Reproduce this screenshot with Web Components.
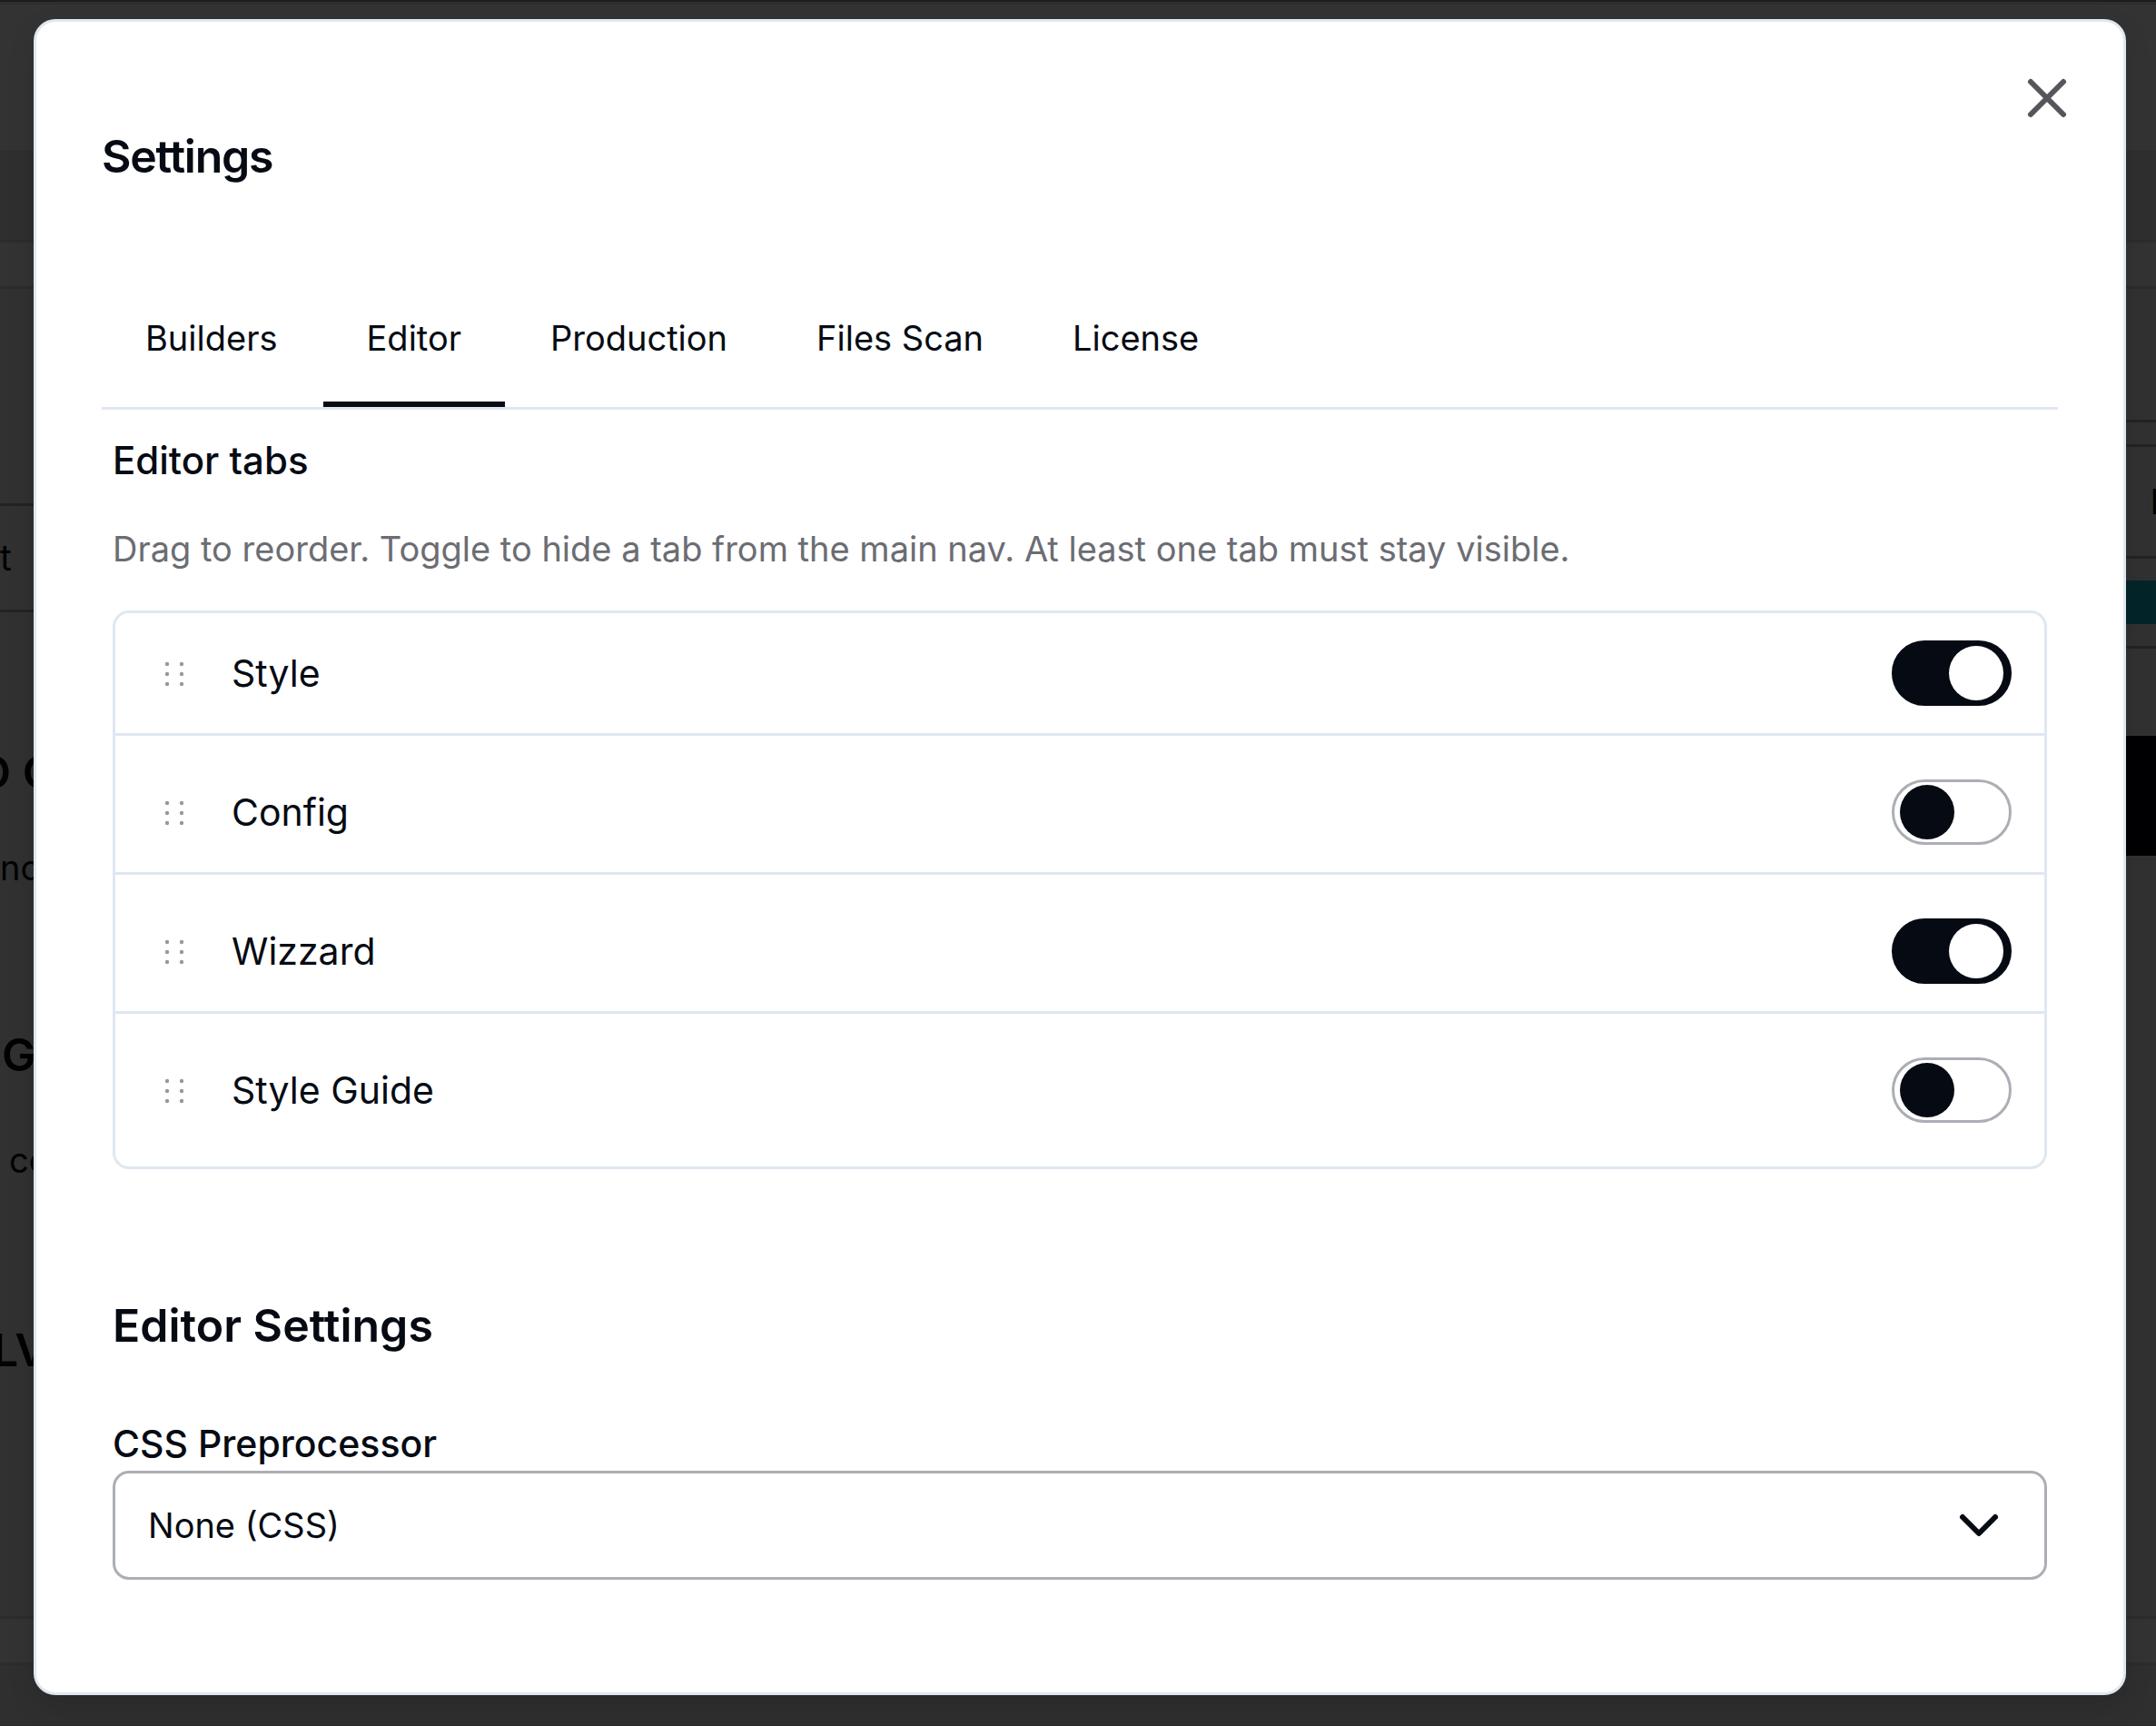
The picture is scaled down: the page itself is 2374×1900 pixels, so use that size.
<!DOCTYPE html>
<html lang="en">
<head>
<meta charset="utf-8">
<title>Settings</title>
<style>
    html, body {
        margin: 0;
        min-height: 100%;
    }
    body {
        display: grid;
        min-height: 100vh;
        font-family: Inter, "Liberation Sans", sans-serif;
        color: #060b13;
        --line: #dfe8f0;
        --muted: #6b6d73;
        --control: #abaeb5;
        --ink: #060b13;
        overflow: hidden;
    }
    page-backdrop, settings-dialog {
        grid-area: 1 / 1;
    }
</style>
</head>
<body>

<page-backdrop></page-backdrop>

<settings-dialog heading="Settings">
    <settings-tabs selected="Editor" items="Builders,Editor,Production,Files Scan,License"></settings-tabs>
    <settings-section heading="Editor tabs" hint="Drag to reorder. Toggle to hide a tab from the main nav. At least one tab must stay visible.">
        <toggle-list>
            <toggle-row label="Style" checked></toggle-row>
            <toggle-row label="Config"></toggle-row>
            <toggle-row label="Wizzard" checked></toggle-row>
            <toggle-row label="Style Guide"></toggle-row>
        </toggle-list>
    </settings-section>
    <settings-section large heading="Editor Settings">
        <select-field label="CSS Preprocessor" options="None (CSS),SCSS,Less"></select-field>
    </settings-section>
</settings-dialog>

<script>
class PageBackdrop extends HTMLElement {
    constructor() {
        super();
        this.attachShadow({mode: 'open'});
    }

    connectedCallback() {
        this.shadowRoot.innerHTML = `
        <style>
            :host {
                display: flex;
                flex-direction: column;
                background: #333333;
                color: #010204;
                overflow: hidden;
            }
            .top {
                height: 160px;
                border-top: 2px solid #1c1c1d;
                box-shadow: inset 0 3px #2e2e30;
                padding-bottom: 3px;
            }
            .bar {
                height: 99px;
                background: #2f2f2f;
                border-bottom: 3px solid #2c2c2c;
            }
            .gap {
                height: 48px;
                border-bottom: 3px solid #2c2c2c;
            }
            .main {
                flex: 1;
                display: flex;
                justify-content: space-between;
                background: #313131;
            }
            .left, .right {
                width: 80px;
                overflow: hidden;
                white-space: nowrap;
            }
            .left span, .right span {
                display: block;
                box-sizing: border-box;
            }
            .field {
                margin-top: 236px;
                height: 120px;
                border-top: 3px solid #232323;
                border-bottom: 3px solid #232323;
                font-size: 39px;
                line-height: 114px;
            }
            .big {
                font-size: 50px;
                line-height: 60px;
                font-weight: 600;
            }
            .small {
                font-size: 38px;
                line-height: 48px;
            }
            .right {
                width: 33px;
            }
            .rule {
                height: 3px;
                background: #232323;
            }
            .key {
                padding: 30px 0 0 27px;
                height: 120px;
                font-size: 38px;
                line-height: 60px;
                font-weight: 600;
            }
            .teal {
                margin: 24px 0;
                height: 48px;
                background: #032529;
            }
            .black {
                margin-top: 96px;
                height: 132px;
                background: #000103;
            }
            .foot {
                height: 48px;
                border-top: 3px solid #2c2c2c;
                border-bottom: 3px solid #2c2c2c;
            }
            .end {
                height: 66px;
                border-bottom: 1px solid #292929;
                background: #2f2f2f;
            }
        </style>
        <div class="top"></div>
        <div class="bar"></div>
        <div class="gap"></div>
        <div class="main">
            <div class="left">
                <span class="field">t</span>
                <span class="big" style="margin:146px 0 0 -24px">D C</span>
                <span class="small" style="margin-top:51px">nc</span>
                <span class="big" style="margin:152px 0 0 2px">G</span>
                <span class="small" style="margin:62px 0 0 10px">cc</span>
                <span class="big" style="margin:155px 0 0 -8px">LV</span>
            </div>
            <div class="right">
                <div class="rule" style="margin-top:144px"></div>
                <div class="rule" style="margin-top:24px"></div>
                <span class="key">H</span>
                <div class="rule"></div>
                <div class="teal"></div>
                <div class="rule"></div>
                <div class="black"></div>
            </div>
        </div>
        <div class="foot"></div>
        <div class="end"></div>
        `;
    }
}

class SettingsDialog extends HTMLElement {
    constructor() {
        super();
        this.attachShadow({mode: 'open'});
    }

    connectedCallback() {
        this.shadowRoot.innerHTML = `
        <style>
            :host {
                display: block;
                position: relative;
                align-self: start;
                box-sizing: border-box;
                margin: 21px 33px 0 37px;
                padding: 120px 72px 124px;
                background: #ffffff;
                border: 3px solid var(--line);
                border-radius: 24px;
                box-shadow: 0 12px 30px rgba(0, 0, 0, 0.12);
            }
            h1 {
                margin: 0 0 87px;
                font-size: 50px;
                line-height: 57px;
                font-weight: 600;
                letter-spacing: -0.025em;
            }
            .close {
                position: absolute;
                top: 48px;
                right: 48px;
                width: 72px;
                height: 72px;
                padding: 0;
                border: 0;
                background: none;
                color: #55565c;
            }
            svg {
                display: block;
            }
        </style>
        <h1>${this.getAttribute('heading')}</h1>
        <slot></slot>
        <button class="close" type="button" aria-label="Close">
            <svg width="72" height="72" viewBox="0 0 24 24" fill="none" stroke="currentColor" stroke-width="2" stroke-linecap="round"><path d="M6 6l12 12M18 6L6 18"/></svg>
        </button>
        `;
        this.setAttribute('role', 'dialog');
        this.shadowRoot.querySelector('.close').addEventListener('click', () => this.remove());
    }
}

class SettingsTabs extends HTMLElement {
    constructor() {
        super();
        this.attachShadow({mode: 'open'});
    }

    connectedCallback() {
        const selected = this.getAttribute('selected');
        const items = this.getAttribute('items').split(',');

        this.shadowRoot.innerHTML = `
        <style>
            :host {
                display: flex;
                gap: 2px;
                border-bottom: 3px solid var(--line);
            }
            button {
                padding: 54px 48px 40px;
                border: 0;
                border-bottom: 6px solid transparent;
                background: none;
                color: inherit;
                font: inherit;
                font-size: 38px;
                line-height: 60px;
            }
            button[aria-selected="true"] {
                border-bottom-color: var(--ink);
            }
        </style>
        ${items.map(item => `<button type="button" role="tab" aria-selected="${item === selected}">${item}</button>`).join('')}
        `;
        const buttons = this.shadowRoot.querySelectorAll('button');
        buttons.forEach(btn => btn.addEventListener('click', () => {
            buttons.forEach(b => b.setAttribute('aria-selected', b === btn));
        }));
    }
}

class SettingsSection extends HTMLElement {
    constructor() {
        super();
        this.attachShadow({mode: 'open'});
    }

    connectedCallback() {
        const hint = this.getAttribute('hint');
        this.shadowRoot.innerHTML = `
        <style>
            :host {
                display: block;
                padding: 24px 12px 0;
            }
            :host([large]) {
                padding-top: 144px;
            }
            h2 {
                margin: 0;
                font-size: 42px;
                line-height: 63px;
                font-weight: 500;
            }
            :host([large]) h2 {
                margin-bottom: 71px;
                font-size: 50px;
                line-height: 57px;
                font-weight: 600;
            }
            p {
                margin: 36px 0 38px;
                color: var(--muted);
                font-size: 38px;
                line-height: 60px;
            }
        </style>
        <h2>${this.getAttribute('heading')}</h2>
        ${hint ? `<p>${hint}</p>` : ''}
        <slot></slot>
        `;
    }
}

class ToggleList extends HTMLElement {
    constructor() {
        super();
        this.attachShadow({mode: 'open'});
    }

    connectedCallback() {
        this.shadowRoot.innerHTML = `
        <style>
            :host {
                display: block;
                border: 3px solid var(--line);
                border-radius: 18px;
            }
            ::slotted(:not(:first-child)) {
                padding-top: 48px;
            }
            ::slotted(:not(:last-child)) {
                border-bottom: 3px solid var(--line);
            }
            ::slotted(:last-child) {
                padding-bottom: 48px;
            }
        </style>
        <slot></slot>
        `;
    }
}

class ToggleRow extends HTMLElement {
    constructor() {
        super();
        this.attachShadow({mode: 'open'});
    }

    connectedCallback() {
        this.shadowRoot.innerHTML = `
        <style>
            :host {
                display: flex;
                align-items: center;
                gap: 36px;
                padding: 30px 36px;
            }
            svg {
                display: block;
                color: #97989d;
            }
            label {
                flex: 1;
                font-size: 41px;
                line-height: 72px;
            }
            input {
                appearance: none;
                box-sizing: border-box;
                width: 132px;
                height: 72px;
                margin: 0;
                padding: 3px 6px;
                border: 3px solid var(--control);
                border-radius: 36px;
            }
            input::before {
                content: "";
                display: block;
                width: 60px;
                height: 60px;
                border-radius: 50%;
                background: var(--ink);
            }
            input:checked {
                background: var(--ink);
                border-color: var(--ink);
            }
            input:checked::before {
                margin-left: auto;
                background: #ffffff;
            }
        </style>
        <svg width="56" height="36" viewBox="0 0 56 36" fill="currentColor" aria-hidden="true">
            <circle cx="21" cy="8" r="2.2"/><circle cx="37" cy="8" r="2.2"/>
            <circle cx="21" cy="19" r="2.2"/><circle cx="37" cy="19" r="2.2"/>
            <circle cx="21" cy="30" r="2.2"/><circle cx="37" cy="30" r="2.2"/>
        </svg>
        <label for="toggle">${this.getAttribute('label')}</label>
        <input id="toggle" type="checkbox" role="switch" ${this.hasAttribute('checked') ? 'checked' : ''}>
        `;
    }
}

class SelectField extends HTMLElement {
    constructor() {
        super();
        this.attachShadow({mode: 'open'});
    }

    connectedCallback() {
        const options = this.getAttribute('options').split(',');
        this.shadowRoot.innerHTML = `
        <style>
            :host {
                display: block;
            }
            label {
                display: block;
                font-size: 41px;
                line-height: 60px;
                font-weight: 500;
            }
            .box {
                display: grid;
                align-items: center;
            }
            select, svg {
                grid-area: 1 / 1;
            }
            select {
                appearance: none;
                width: 100%;
                height: 120px;
                padding: 0 36px;
                border: 3px solid var(--control);
                border-radius: 18px;
                background: #ffffff;
                color: inherit;
                font: inherit;
                font-size: 38px;
            }
            svg {
                justify-self: end;
                margin-right: 39px;
                pointer-events: none;
            }
        </style>
        <label for="field">${this.getAttribute('label')}</label>
        <div class="box">
            <select id="field">${options.map(o => `<option>${o}</option>`).join('')}</select>
            <svg width="72" height="72" viewBox="0 0 24 24" fill="none" stroke="currentColor" stroke-width="2" stroke-linecap="round" stroke-linejoin="round"><path d="M6 9l6 6 6-6"/></svg>
        </div>
        `;
    }
}

customElements.define('page-backdrop', PageBackdrop);
customElements.define('settings-dialog', SettingsDialog);
customElements.define('settings-tabs', SettingsTabs);
customElements.define('settings-section', SettingsSection);
customElements.define('toggle-list', ToggleList);
customElements.define('toggle-row', ToggleRow);
customElements.define('select-field', SelectField);
</script>
</body>
</html>
